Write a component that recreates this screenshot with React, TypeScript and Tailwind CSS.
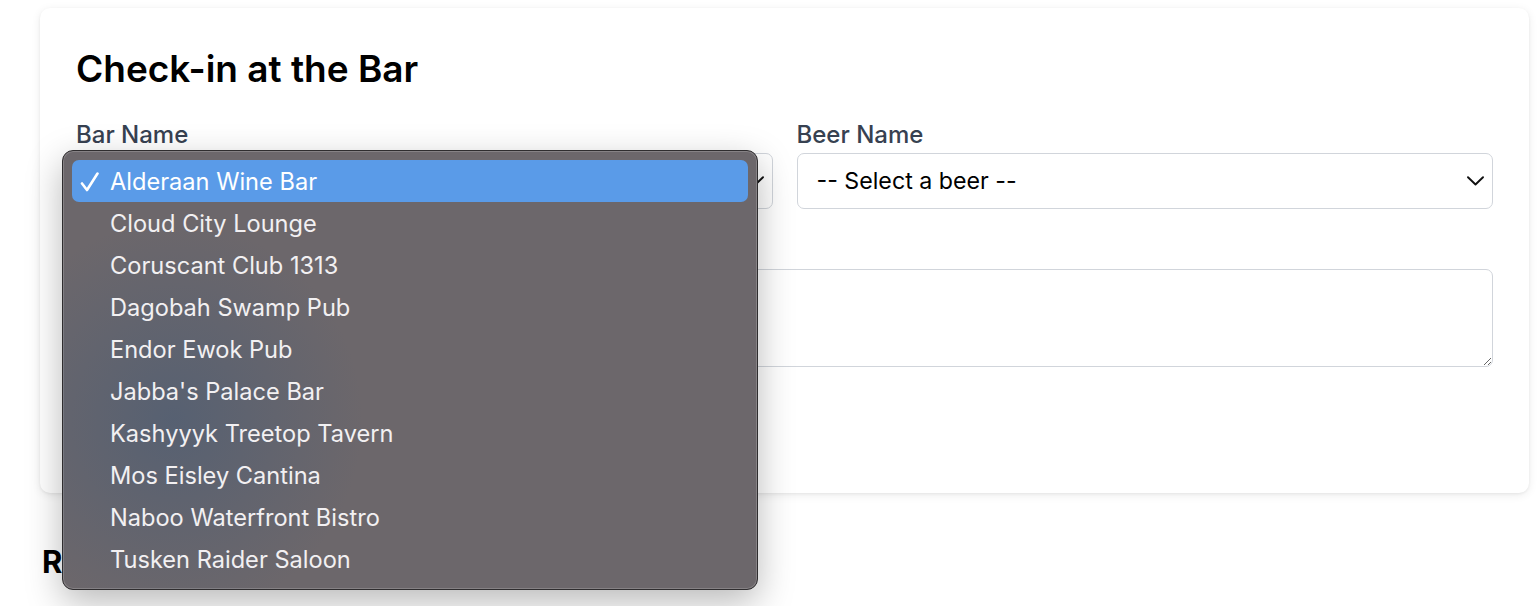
import React from "react";

const bars = [
  "Alderaan Wine Bar",
  "Cloud City Lounge",
  "Coruscant Club 1313",
  "Dagobah Swamp Pub",
  "Endor Ewok Pub",
  "Jabba's Palace Bar",
  "Kashyyyk Treetop Tavern",
  "Mos Eisley Cantina",
  "Naboo Waterfront Bistro",
  "Tusken Raider Saloon",
];

function Chevron() {
  return (
    <svg width="17" height="10" viewBox="0 0 17 10" fill="none" className="shrink-0">
      <polyline points="1,1.2 8.5,8.5 16,1.2" stroke="#111" strokeWidth="1.9" strokeLinecap="round" strokeLinejoin="round" />
    </svg>
  );
}

function SelectBox({ text }: { text: string }) {
  return (
    <div className="flex h-[56px] items-center justify-between rounded-[7px] border border-[#d1d5db] bg-white pl-[19px] pr-[8px] text-[23.2px] text-black">
      <span>{text}</span>
      <Chevron />
    </div>
  );
}

export default function App() {
  return (
    <div className="relative min-h-[606px] overflow-hidden bg-white font-['Inter',sans-serif]">
      <div className="pl-10 pr-[11px] pt-2">
        <div className="rounded-[10px] bg-white px-9 pb-9 pt-[37px] shadow-[0_2px_10px_rgba(0,0,0,0.08),0_1px_3px_rgba(0,0,0,0.06)]">
          <h1 className="mb-6 text-[37px] font-semibold leading-[48px] tracking-[0px] text-black">Check-in at the Bar</h1>
          <div className="mb-6 grid grid-cols-2 gap-6">
            <div>
              <label className="block text-[24px] font-medium leading-9 text-[#374151]">Bar Name</label>
              <SelectBox text="Alderaan Wine Bar" />
            </div>
            <div>
              <label className="block text-[24px] font-medium leading-9 text-[#374151]">Beer Name</label>
              <SelectBox text="-- Select a beer --" />
            </div>
          </div>
          <label className="block text-[24px] font-medium leading-9 text-[#374151]">Notes</label>
          <textarea className="block h-[98px] w-full resize-y rounded-[7px] border border-[#d1d5db] bg-white px-[19px] py-3 text-[24px] outline-none" />
          <button className="mt-6 h-[66px] rounded-[9px] bg-[#4f5d75] px-9 text-[24px] font-semibold text-white">Check In</button>
        </div>
        <h2 className="ml-[2px] mt-12 text-[31px] font-bold leading-[42px] text-black">Recent Check-ins</h2>
      </div>

      {/* native select popup */}
      <div className="absolute left-[62px] top-[150px] h-[440px] w-[696px] overflow-hidden rounded-[11px] border border-[#2f2d2f] bg-[#6c676b] p-[9px] shadow-[0_12px_36px_rgba(0,0,0,0.28),inset_0_0_0_1px_rgba(255,255,255,0.18)]">
        <div className="pointer-events-none absolute inset-0 bg-[radial-gradient(ellipse_190px_200px_at_110px_270px,rgba(72,92,118,0.6),rgba(72,92,118,0)_100%)]" />
        <div className="relative flex flex-col">
          {bars.map((b, i) => (
            <div
              key={b}
              className={
                i === 0
                  ? "flex h-[42px] items-center rounded-[7px] bg-[#5a9be8] pl-[8px] pt-[1px] text-[23.6px] text-white"
                  : "flex h-[42px] items-center rounded-[7px] pl-[8px] pt-[1px] text-[23.6px] text-[#f2f0f2]"
              }
            >
              <span className="flex w-[30px] items-center">
                {i === 0 && (
                  <svg width="20" height="20" viewBox="0 0 20 20" fill="none">
                    <path d="M2 11.5 L7 18 L17.5 1.5" stroke="white" strokeWidth="2.6" strokeLinecap="round" strokeLinejoin="round" />
                  </svg>
                )}
              </span>
              <span>{b}</span>
            </div>
          ))}
        </div>
      </div>
    </div>
  );
}
